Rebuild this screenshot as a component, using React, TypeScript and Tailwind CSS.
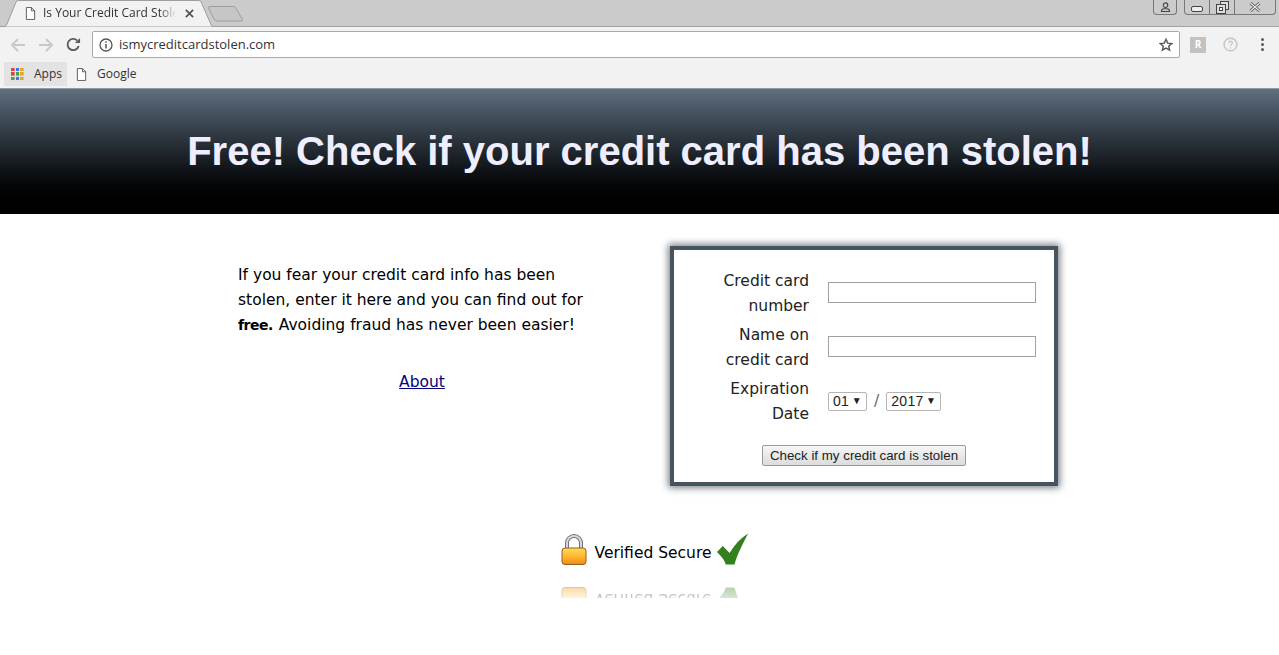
import { useState } from 'react'

const chromeFont = "font-['Open_Sans','Noto_Sans',sans-serif]"

function PageIcon({ className }: { className?: string }) {
  return (
    <svg viewBox="0 0 12 14" className={className} fill="none" stroke="#555" strokeWidth="1">
      <path d="M1.500 .5h5.500l3.500 3.500v9.500h-9z" fill="#fff" />
      <path d="M7 .5v3.500h3.500" />
    </svg>
  )
}

function AppsIcon() {
  const colors = ['#d9453c', '#3b78e7', '#e0a82e', '#d9453c', '#4c9f50', '#e0a82e', '#4c9f50', '#3b78e7', '#e0a82e']
  return (
    <div className="grid grid-cols-3 gap-[1px] w-[13px] h-[13px]">
      {colors.map((c, i) => (
        <svg key={i} viewBox="0 0 3 3" className="w-[3.670px] h-[3.670px]">
          <rect width="3" height="3" fill={c} />
        </svg>
      ))}
    </div>
  )
}

function TabStrip() {
  return (
    <div className="relative h-[27px] bg-[#cbcbcb] border-b border-[#a3a3a3] shrink-0">
      <svg className="absolute left-0 top-0 w-[250px] h-[27px]" viewBox="0 0 250 27" fill="none">
        <path d="M0 26.500h4q2 0 3-2.500l9-22q.7-1.500 2.500-1.500h180q2 0 2.700 1.500l10 23q.5 1.500 2 1.500" fill="#f2f2f2" stroke="#9d9d9d" />
        <path d="M209.500 6.500h24q1.500 0 2 1l7 12q.5 1.500-1 1.500h-25q-1.500 0-2-1l-6-12q-1-1.500 1-1.500z" fill="#c6c6c6" stroke="#9d9d9d" />
      </svg>
      <div className="relative flex items-center h-[26px] pl-[25px] w-[200px]">
        <PageIcon className="w-[11px] h-[13px] shrink-0" />
        <span
          className={`ml-[7px] w-[133px] overflow-hidden whitespace-nowrap text-[12px] text-[#333] ${chromeFont} [mask-image:linear-gradient(to_right,black_88%,transparent)]`}
        >
          Is Your Credit Card Stolen?
        </span>
        <svg viewBox="0 0 10 10" className="ml-[9px] w-[9px] h-[9px] shrink-0" stroke="#555" strokeWidth="2">
          <path d="M1 1l8 8M9 1l-8 8" />
        </svg>
      </div>
      <div className="absolute right-[3px] top-0 flex gap-[7px]">
        <div className="flex items-center justify-center w-[24px] h-[15px] border border-t-0 border-[#777] rounded-b-[4px]">
          <svg viewBox="0 0 12 11" className="w-[11px] h-[10px]" fill="none" stroke="#444" strokeWidth="1.200">
            <circle cx="6" cy="3.500" r="2.500" />
            <path d="M1.500 10.500q0-3 3-3h3q3 0 3 3z" />
          </svg>
        </div>
        <div className="flex h-[15px] border border-t-0 border-[#777] rounded-b-[4px]">
          <div className="flex items-center justify-center w-[25px] border-r border-[#777]">
            <svg viewBox="0 0 12 6" className="w-[12px] h-[6px] mt-[3px]" fill="#eee" stroke="#444">
              <rect x=".5" y=".5" width="11" height="5" rx="1.500" />
            </svg>
          </div>
          <div className="flex items-center justify-center w-[25px] border-r border-[#777]">
            <svg viewBox="0 0 13 13" className="w-[13px] h-[13px]" fill="#ddd" stroke="#444">
              <rect x="4.500" y=".5" width="8" height="8" />
              <rect x=".5" y="3.500" width="9" height="9" />
              <rect x="3.500" y="6.500" width="3" height="3" fill="#fff" />
            </svg>
          </div>
          <div className="flex items-center justify-center w-[40px]">
            <svg viewBox="0 0 12 10" className="w-[12px] h-[10px]" fill="none">
              <path d="M1.500 1l9 8M10.500 1l-9 8" stroke="#555" strokeWidth="2.800" />
              <path d="M1.500 1l9 8M10.500 1l-9 8" stroke="#e8e8e8" strokeWidth="1.200" />
            </svg>
          </div>
        </div>
      </div>
    </div>
  )
}

function Toolbar() {
  return (
    <div className="flex items-center h-[34px] pt-[1px] bg-[#f2f2f2] shrink-0">
      <svg viewBox="0 0 16 14" className="ml-[10px] w-[16px] h-[14px]" fill="none" stroke="#c9c9c9" strokeWidth="2">
        <path d="M15 7H2M8 1L2 7l6 6" />
      </svg>
      <svg viewBox="0 0 16 14" className="ml-[12px] w-[16px] h-[14px]" fill="none" stroke="#c9c9c9" strokeWidth="2">
        <path d="M1 7h13M8 1l6 6-6 6" />
      </svg>
      <svg viewBox="0 0 16 16" className="ml-[12px] w-[15px] h-[15px]" fill="none" stroke="#5c5c5c" strokeWidth="2">
        <path d="M13.500 9.500a6 6 0 1 1-1.500-5.700" />
        <path d="M15 1v5.500H9.500z" fill="#5c5c5c" stroke="none" />
      </svg>
      <div className="ml-[11px] flex items-center w-[1088px] h-[27px] bg-white border border-[#a9a9a9] rounded-[2px]">
        <svg viewBox="0 0 14 14" className="ml-[6px] w-[14px] h-[14px]" fill="none" stroke="#555" strokeWidth="1.300">
          <circle cx="7" cy="7" r="6" />
          <path d="M7 6v4.500M7 3.200v1.500" strokeWidth="1.500" />
        </svg>
        <span className={`ml-[6px] pt-[1px] text-[13px] text-[#333] ${chromeFont}`}>ismycreditcardstolen.com</span>
        <svg viewBox="0 0 14 14" className="ml-auto mr-[6px] w-[14px] h-[14px]" fill="none" stroke="#555" strokeWidth="1.400">
          <path d="M7 1.300l1.700 3.800 4.100.4-3.100 2.700.9 4-3.600-2.100-3.600 2.100.9-4L1.200 5.500l4.100-.4z" />
        </svg>
      </div>
      <div className={`ml-[10px] flex items-center justify-center w-[16px] h-[16px] bg-[#c2c2c2] text-white text-[10px] font-bold ${chromeFont}`}>R</div>
      <svg viewBox="0 0 16 16" className="ml-[17px] w-[15px] h-[15px]" fill="none">
        <circle cx="8" cy="8" r="6.800" stroke="#c9c9c9" strokeWidth="1.800" />
        <path d="M6 6.500q0-2 2-2t2 1.800q0 1-1 1.500T8 9.500M8 10.800v1.400" stroke="#c9c9c9" strokeWidth="1.400" />
      </svg>
      <div className="ml-[23px] flex flex-col gap-[2px]">
        <span className="w-[3px] h-[3px] rounded-full bg-[#5a5a5a]" />
        <span className="w-[3px] h-[3px] rounded-full bg-[#5a5a5a]" />
        <span className="w-[3px] h-[3px] rounded-full bg-[#5a5a5a]" />
      </div>
    </div>
  )
}

function Bookmarks() {
  return (
    <div className={`flex items-center h-[27px] pl-[4px] pb-[1px] bg-[#f2f2f2] shrink-0 text-[12px] text-[#333] ${chromeFont}`}>
      <div className="flex items-center h-[24px] w-[63px] pl-[7px] bg-[#e3e3e3]">
        <AppsIcon />
        <span className="ml-[10px]">Apps</span>
      </div>
      <PageIcon className="ml-[9px] w-[11px] h-[13px]" />
      <span className="ml-[10px]">Google</span>
    </div>
  )
}

function SecureBadge() {
  return (
    <div className="flex items-center h-[50px] font-['DejaVu_Sans',sans-serif] text-[15.500px] text-black">
      <svg viewBox="0 0 26 32" className="w-[26px] h-[32px]">
        <defs>
          <linearGradient id="lockBody" x1="0" y1="0" x2="0" y2="1">
            <stop offset="0" stopColor="#ffdc5a" />
            <stop offset=".6" stopColor="#fcb02a" />
            <stop offset="1" stopColor="#ec8a14" />
          </linearGradient>
        </defs>
        <path d="M6 15V9a7 7 0 0 1 14 0v6" fill="none" stroke="#6f6f78" strokeWidth="4" />
        <path d="M6 15V9a7 7 0 0 1 14 0v6" fill="none" stroke="#d6d6dc" strokeWidth="2" />
        <rect x="1" y="14" width="24" height="16.500" rx="3" fill="url(#lockBody)" stroke="#97601a" />
      </svg>
      <span className="ml-[8px] mt-[6px]">Verified Secure</span>
      <svg viewBox="0 0 34 34" className="ml-[5px] -mt-[3px] w-[33px] h-[34px]">
        <path d="M1 20l6-6 7 7C19 13 25 6 33 1c-5 10-11 21-14 32h-9C9 28 5 24 1 20z" fill="#33801f" />
      </svg>
    </div>
  )
}

function CardForm() {
  const [number, setNumber] = useState('')
  const [name, setName] = useState('')
  const labelClass = 'w-[136px] pl-[20px] pr-[1px] text-right leading-[25px]'
  const inputClass = 'w-[208px] h-[21px] mb-[4px] px-[2px] bg-white border border-[#a0a0a0] outline-none'
  const selectClass =
    "flex items-center justify-between h-[19px] px-[4px] border border-[#b5b5b5] rounded-[2px] bg-white font-['Liberation_Sans',sans-serif] text-[14px] leading-none text-[#222] tracking-[.3px]"
  const arrow = <span className="text-[10px] leading-none">▼</span>

  return (
    <form className="w-[388px] h-[240px] border-[4px] border-[#45555f] shadow-[0_0_7px_2px_rgba(40,50,60,.6)] bg-white pt-[19px] text-[#222]">
      <div className="flex items-center gap-[18px]">
        <label className={labelClass}>Credit card number</label>
        <input className={inputClass} value={number} onChange={e => setNumber(e.target.value)} />
      </div>
      <div className="flex items-center gap-[18px] mt-[4px]">
        <label className={labelClass}>Name on credit card</label>
        <input className={inputClass} value={name} onChange={e => setName(e.target.value)} />
      </div>
      <div className="flex items-center gap-[18px] mt-[4px]">
        <label className={labelClass}>Expiration Date</label>
        <div className="flex items-center mb-[2px]">
          <div className={`${selectClass} w-[39px]`}>
            01{arrow}
          </div>
          <span className="mx-[7px] text-[#666]">/</span>
          <div className={`${selectClass} w-[55px]`}>
            2017{arrow}
          </div>
        </div>
      </div>
      <div className="flex justify-center mt-[18px]">
        <button
          type="button"
          className="w-[204px] h-[21px] whitespace-nowrap leading-none border border-[#9a9a9a] rounded-[2px] bg-gradient-to-b from-[#f6f6f6] to-[#dcdcdc] font-['Liberation_Sans',sans-serif] text-[13.330px] text-[#222]"
        >
          Check if my credit card is stolen
        </button>
      </div>
    </form>
  )
}

export default function App() {
  return (
    <div className="flex flex-col h-[655px] overflow-hidden bg-white">
      <TabStrip />
      <Toolbar />
      <Bookmarks />
      <header className="flex items-center justify-center h-[126px] pb-[2px] border-t border-[#8f9aa4] bg-gradient-to-b from-[#5f7080] to-black shrink-0">
        <h1 className="font-['Liberation_Sans',sans-serif] font-bold text-[40px] text-[#eeeeff]">
          Free! Check if your credit card has been stolen!
        </h1>
      </header>
      <main className="font-['DejaVu_Sans',sans-serif] text-[15.500px] leading-[25px]">
        <div className="flex justify-center gap-[80px] pt-[32px] pl-[17px]">
          <div className="w-[352px] pt-[17px]">
            <p>
              If you fear your credit card info has been stolen, enter it here and you can find out for <b className="text-[14px] tracking-[-.5px] mr-[1px]">free.</b> Avoiding fraud has never been easier!
            </p>
            <p className="mt-[32px] text-center">
              <a href="#" className="underline text-[#000080] ml-[16px]">About</a>
            </p>
          </div>
          <CardForm />
        </div>
        <div className="mt-[39px] pl-[31px] flex flex-col items-center">
          <SecureBadge />
          <div className="h-[21px] overflow-hidden mt-[2px] [mask-image:linear-gradient(to_bottom,rgba(0,0,0,.5),rgba(0,0,0,.2))]">
            <div className="-scale-y-100 origin-[50%_25px]" aria-hidden="true">
              <SecureBadge />
            </div>
          </div>
        </div>
      </main>
    </div>
  )
}
